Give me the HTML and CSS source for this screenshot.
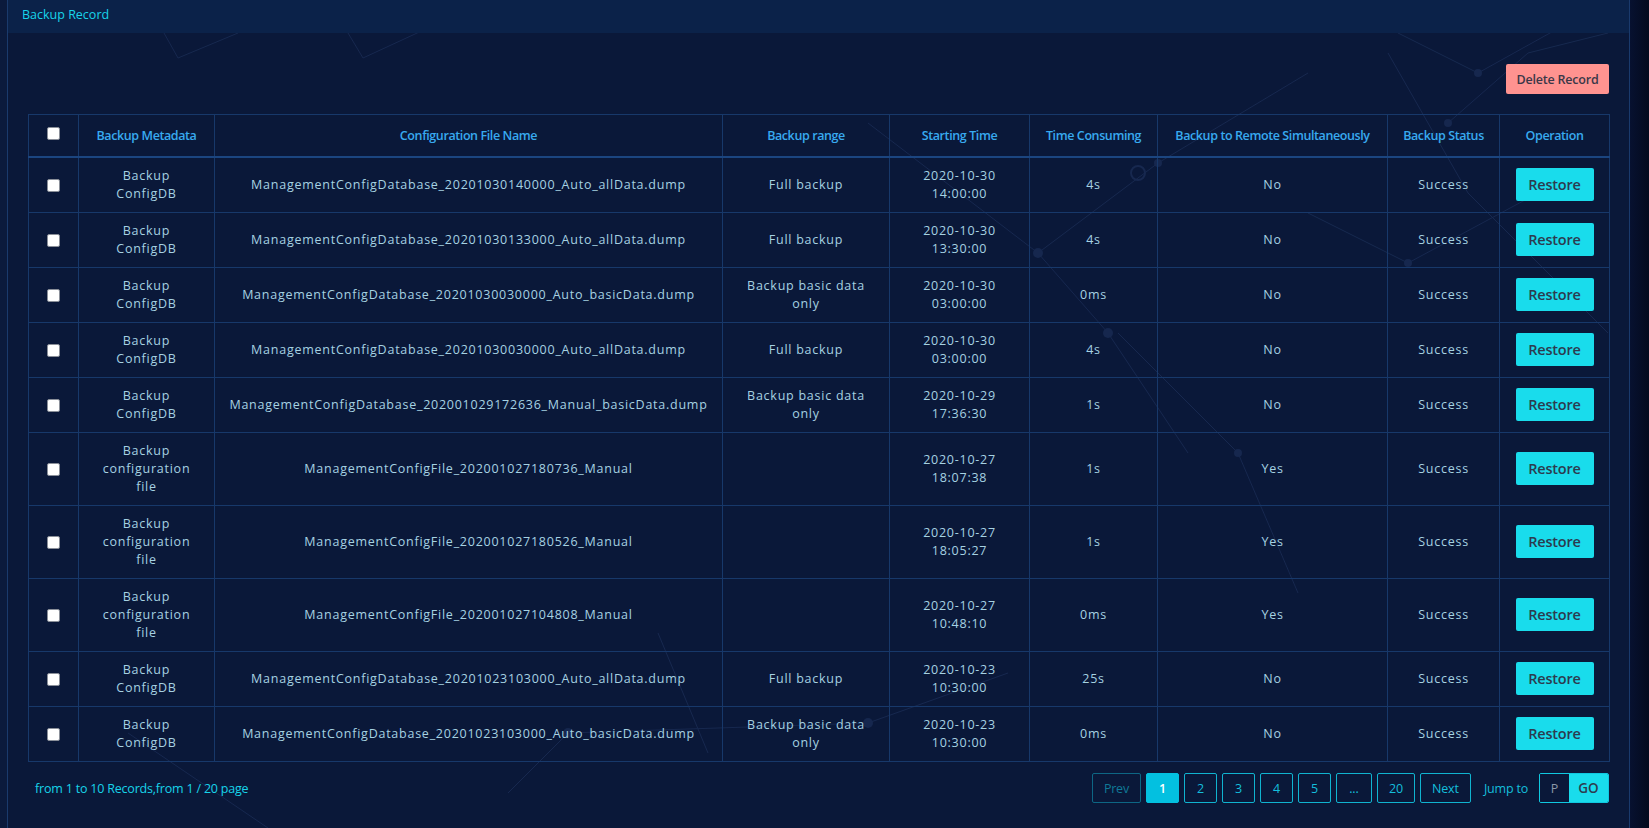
FILE: index.html
```html
<!DOCTYPE html>
<html lang="en">
<head>
<meta charset="utf-8">
<title>Backup Record</title>
<link rel="stylesheet" href="styles.css">
</head>
<body>
<div class="page">
  <div class="side-left"></div>
  <main class="panel">
    <header class="panel-head">
      <h1 class="panel-title">Backup Record</h1>
    </header>
    <section class="panel-body">
      <svg class="bg-net" viewBox="0 0 1621 795" preserveAspectRatio="none" aria-hidden="true">
        <g stroke="#17284f" stroke-width="1" fill="none">
          <path d="M156 0 L170 25 L230 0"/>
          <path d="M340 0 L355 25 L420 -5"/>
          <path d="M860 90 L1030 220 L1100 300 L1180 420"/>
          <path d="M1030 220 L1150 130 L1300 40"/>
          <path d="M1390 0 L1470 40 L1560 -10"/>
          <path d="M1440 90 L1520 20 L1600 0"/>
          <path d="M1110 300 L1230 420 L1290 560"/>
          <path d="M1380 20 L1460 160 L1600 300"/>
          <path d="M120 700 L260 795"/>
          <path d="M500 760 L560 700 L860 690 L1000 640"/>
          <path d="M650 600 L700 720"/>
          <path d="M1300 180 L1400 230 L1530 160"/>
        </g>
        <g fill="#16274e">
          <circle cx="1030" cy="220" r="5"/>
          <circle cx="1150" cy="130" r="4"/>
          <circle cx="1470" cy="40" r="4"/>
          <circle cx="1440" cy="90" r="4"/>
          <circle cx="1100" cy="300" r="5"/>
          <circle cx="1400" cy="230" r="4"/>
          <circle cx="560" cy="700" r="5"/>
          <circle cx="860" cy="690" r="5"/>
          <circle cx="1230" cy="420" r="4"/>
        </g>
        <circle cx="1130" cy="140" r="7" stroke="#17284f" stroke-width="2" fill="none"/>
      </svg>

      <div class="toolbar">
        <button class="btn-delete" type="button">Delete Record</button>
      </div>

      <table class="records">
        <colgroup>
          <col class="w-check"><col class="w-meta"><col class="w-file"><col class="w-range"><col class="w-start"><col class="w-cons"><col class="w-remote"><col class="w-status"><col class="w-op">
        </colgroup>
        <thead>
          <tr>
            <th><span class="check check-head"></span></th>
            <th>Backup Metadata</th>
            <th>Configuration File Name</th>
            <th>Backup range</th>
            <th>Starting Time</th>
            <th>Time Consuming</th>
            <th>Backup to Remote Simultaneously</th>
            <th>Backup Status</th>
            <th>Operation</th>
          </tr>
        </thead>
        <tbody>
          <tr>
            <td><span class="check"></span></td>
            <td class="c-meta">Backup ConfigDB</td>
            <td>ManagementConfigDatabase_20201030140000_Auto_allData.dump</td>
            <td class="c-range">Full backup</td>
            <td class="c-start">2020-10-30 14:00:00</td>
            <td>4s</td>
            <td>No</td>
            <td>Success</td>
            <td><button class="btn-restore" type="button">Restore</button></td>
          </tr>
          <tr>
            <td><span class="check"></span></td>
            <td class="c-meta">Backup ConfigDB</td>
            <td>ManagementConfigDatabase_20201030133000_Auto_allData.dump</td>
            <td class="c-range">Full backup</td>
            <td class="c-start">2020-10-30 13:30:00</td>
            <td>4s</td>
            <td>No</td>
            <td>Success</td>
            <td><button class="btn-restore" type="button">Restore</button></td>
          </tr>
          <tr>
            <td><span class="check"></span></td>
            <td class="c-meta">Backup ConfigDB</td>
            <td>ManagementConfigDatabase_20201030030000_Auto_basicData.dump</td>
            <td class="c-range">Backup basic data only</td>
            <td class="c-start">2020-10-30 03:00:00</td>
            <td>0ms</td>
            <td>No</td>
            <td>Success</td>
            <td><button class="btn-restore" type="button">Restore</button></td>
          </tr>
          <tr>
            <td><span class="check"></span></td>
            <td class="c-meta">Backup ConfigDB</td>
            <td>ManagementConfigDatabase_20201030030000_Auto_allData.dump</td>
            <td class="c-range">Full backup</td>
            <td class="c-start">2020-10-30 03:00:00</td>
            <td>4s</td>
            <td>No</td>
            <td>Success</td>
            <td><button class="btn-restore" type="button">Restore</button></td>
          </tr>
          <tr>
            <td><span class="check"></span></td>
            <td class="c-meta">Backup ConfigDB</td>
            <td>ManagementConfigDatabase_202001029172636_Manual_basicData.dump</td>
            <td class="c-range">Backup basic data only</td>
            <td class="c-start">2020-10-29 17:36:30</td>
            <td>1s</td>
            <td>No</td>
            <td>Success</td>
            <td><button class="btn-restore" type="button">Restore</button></td>
          </tr>
          <tr>
            <td><span class="check"></span></td>
            <td class="c-meta">Backup configuration file</td>
            <td>ManagementConfigFile_202001027180736_Manual</td>
            <td class="c-range"></td>
            <td class="c-start">2020-10-27 18:07:38</td>
            <td>1s</td>
            <td>Yes</td>
            <td>Success</td>
            <td><button class="btn-restore" type="button">Restore</button></td>
          </tr>
          <tr>
            <td><span class="check"></span></td>
            <td class="c-meta">Backup configuration file</td>
            <td>ManagementConfigFile_202001027180526_Manual</td>
            <td class="c-range"></td>
            <td class="c-start">2020-10-27 18:05:27</td>
            <td>1s</td>
            <td>Yes</td>
            <td>Success</td>
            <td><button class="btn-restore" type="button">Restore</button></td>
          </tr>
          <tr>
            <td><span class="check"></span></td>
            <td class="c-meta">Backup configuration file</td>
            <td>ManagementConfigFile_202001027104808_Manual</td>
            <td class="c-range"></td>
            <td class="c-start">2020-10-27 10:48:10</td>
            <td>0ms</td>
            <td>Yes</td>
            <td>Success</td>
            <td><button class="btn-restore" type="button">Restore</button></td>
          </tr>
          <tr>
            <td><span class="check"></span></td>
            <td class="c-meta">Backup ConfigDB</td>
            <td>ManagementConfigDatabase_20201023103000_Auto_allData.dump</td>
            <td class="c-range">Full backup</td>
            <td class="c-start">2020-10-23 10:30:00</td>
            <td>25s</td>
            <td>No</td>
            <td>Success</td>
            <td><button class="btn-restore" type="button">Restore</button></td>
          </tr>
          <tr>
            <td><span class="check"></span></td>
            <td class="c-meta">Backup ConfigDB</td>
            <td>ManagementConfigDatabase_20201023103000_Auto_basicData.dump</td>
            <td class="c-range">Backup basic data only</td>
            <td class="c-start">2020-10-23 10:30:00</td>
            <td>0ms</td>
            <td>No</td>
            <td>Success</td>
            <td><button class="btn-restore" type="button">Restore</button></td>
          </tr>
        </tbody>
      </table>

      <div class="footer">
        <div class="summary">from 1 to 10 Records,from 1 / 20 page</div>
        <nav class="pager">
          <span class="pg pg-prev">Prev</span>
          <span class="pg pg-num pg-active">1</span>
          <span class="pg pg-num">2</span>
          <span class="pg pg-num">3</span>
          <span class="pg pg-num">4</span>
          <span class="pg pg-num">5</span>
          <span class="pg pg-more">...</span>
          <span class="pg pg-last">20</span>
          <span class="pg pg-next">Next</span>
          <span class="jump-label">Jump to</span>
          <span class="jump">
            <span class="jump-input">P</span>
            <span class="jump-go">GO</span>
          </span>
        </nav>
      </div>
    </section>
  </main>
  <div class="side-right"></div>
</div>
</body>
</html>
```

FILE: styles.css
```css
* { box-sizing: border-box; }

html, body {
  margin: 0;
  padding: 0;
  height: 100%;
}

body {
  background: #050c22;
  font-family: "Open Sans", "Noto Sans", sans-serif;
  overflow: hidden;
}

.page {
  display: flex;
  height: 828px;
}

.side-left {
  width: 7px;
  flex: none;
  background: #0b1a3c;
}

.side-right {
  flex: 1;
  background: linear-gradient(90deg, #071130, #040a1d);
}

.panel {
  width: 1623px;
  flex: none;
  display: flex;
  flex-direction: column;
  background: #0a1839;
  border-left: 1px solid #1a3a6c;
  border-right: 1px solid #1a3a6c;
}

.panel-head {
  height: 33px;
  flex: none;
  background: #0b2249;
  display: flex;
  align-items: center;
  padding-left: 14px;
}

.panel-title {
  margin: 0;
  font-size: 12.5px;
  font-weight: 400;
  color: #17d4ea;
  line-height: 1;
  margin-top: -2px;
}

.panel-body {
  position: relative;
  flex: 1;
  padding: 31px 20px 0 20px;
}

.bg-net {
  position: absolute;
  left: 0;
  top: 0;
  width: 100%;
  height: 100%;
  pointer-events: none;
}

.toolbar {
  position: relative;
  display: flex;
  justify-content: flex-end;
  margin-bottom: 20px;
}

.btn-delete {
  width: 103px;
  height: 30px;
  border: none;
  border-radius: 2px;
  background: #ff9390;
  color: #3a3848;
  font-family: "Open Sans", sans-serif;
  font-size: 12.5px;
  font-weight: 600;
  letter-spacing: -0.2px;
  padding: 0;
}

.records {
  position: relative;
  width: 1581px;
  table-layout: fixed;
  border-collapse: collapse;
  border: 1px solid #17386a;
}

.w-check { width: 50px; }
.w-meta { width: 136px; }
.w-file { width: 508px; }
.w-range { width: 167px; }
.w-start { width: 140px; }
.w-cons { width: 128px; }
.w-remote { width: 230px; }
.w-status { width: 112px; }
.w-op { width: 110px; }

.records th {
  height: 42px;
  padding: 0 4px;
  border: 1px solid #17386a;
  border-bottom: 2px solid #1b4580;
  color: #38aaf0;
  font-size: 12.5px;
  font-weight: 600;
  letter-spacing: -0.4px;
  line-height: 17px;
  text-align: center;
  vertical-align: middle;
}

.records td {
  padding: 9px 8px;
  border: 1px solid #17386a;
  color: #a6d2e2;
  font-size: 12.5px;
  font-weight: 400;
  letter-spacing: 0.75px;
  line-height: 18px;
  text-align: center;
  vertical-align: middle;
}

.records td.c-meta { padding-left: 18px; padding-right: 18px; }
.records td.c-range { padding-left: 22px; padding-right: 22px; }
.records td.c-start { padding-left: 20px; padding-right: 20px; }

.check {
  display: inline-block;
  width: 13px;
  height: 13px;
  background: #ffffff;
  border: 1px solid #8a8f99;
  border-radius: 2px;
  vertical-align: middle;
}

.check-head {
  margin-bottom: 4px;
}

.btn-restore {
  width: 78px;
  height: 33px;
  border: none;
  border-radius: 2px;
  background: #19dcec;
  color: #2c3b4f;
  font-family: "Open Sans", sans-serif;
  font-size: 14.5px;
  font-weight: 600;
  letter-spacing: -0.2px;
  padding: 0;
  display: block;
  margin: 0 auto;
}

.footer {
  position: relative;
  display: flex;
  justify-content: space-between;
  align-items: center;
  margin-top: 11px;
  height: 31px;
}

.summary {
  padding-left: 7px;
  color: #17d4ea;
  font-size: 12.5px;
  letter-spacing: -0.2px;
}

.pager {
  display: flex;
  align-items: center;
  gap: 5px;
}

.pg {
  height: 30px;
  display: flex;
  align-items: center;
  justify-content: center;
  border: 1px solid #10b3d0;
  border-radius: 2px;
  color: #14bfdc;
  font-size: 12.5px;
  letter-spacing: -0.2px;
}

.pg-prev {
  width: 49px;
  border-color: #0d6684;
  color: #0f7a98;
}

.pg-num { width: 33px; }
.pg-more { width: 36px; }
.pg-last { width: 38px; }
.pg-next { width: 51px; }

.pg-active {
  background: #03c0e0;
  border-color: #03c0e0;
  color: #ffffff;
  font-weight: 600;
}

.jump-label {
  margin-left: 8px;
  margin-right: 6px;
  color: #14bfdc;
  font-size: 12.5px;
  letter-spacing: -0.2px;
}

.jump {
  display: flex;
  height: 30px;
  border: 1px solid #10c8e0;
  border-radius: 2px;
  overflow: hidden;
}

.jump-input {
  width: 29px;
  display: flex;
  align-items: center;
  justify-content: center;
  color: #8b98a8;
  font-size: 12.5px;
  background: #0a1839;
}

.jump-go {
  width: 39px;
  display: flex;
  align-items: center;
  justify-content: center;
  background: #19dcec;
  color: #2c3b4f;
  font-size: 13.5px;
  font-weight: 600;
}
```
